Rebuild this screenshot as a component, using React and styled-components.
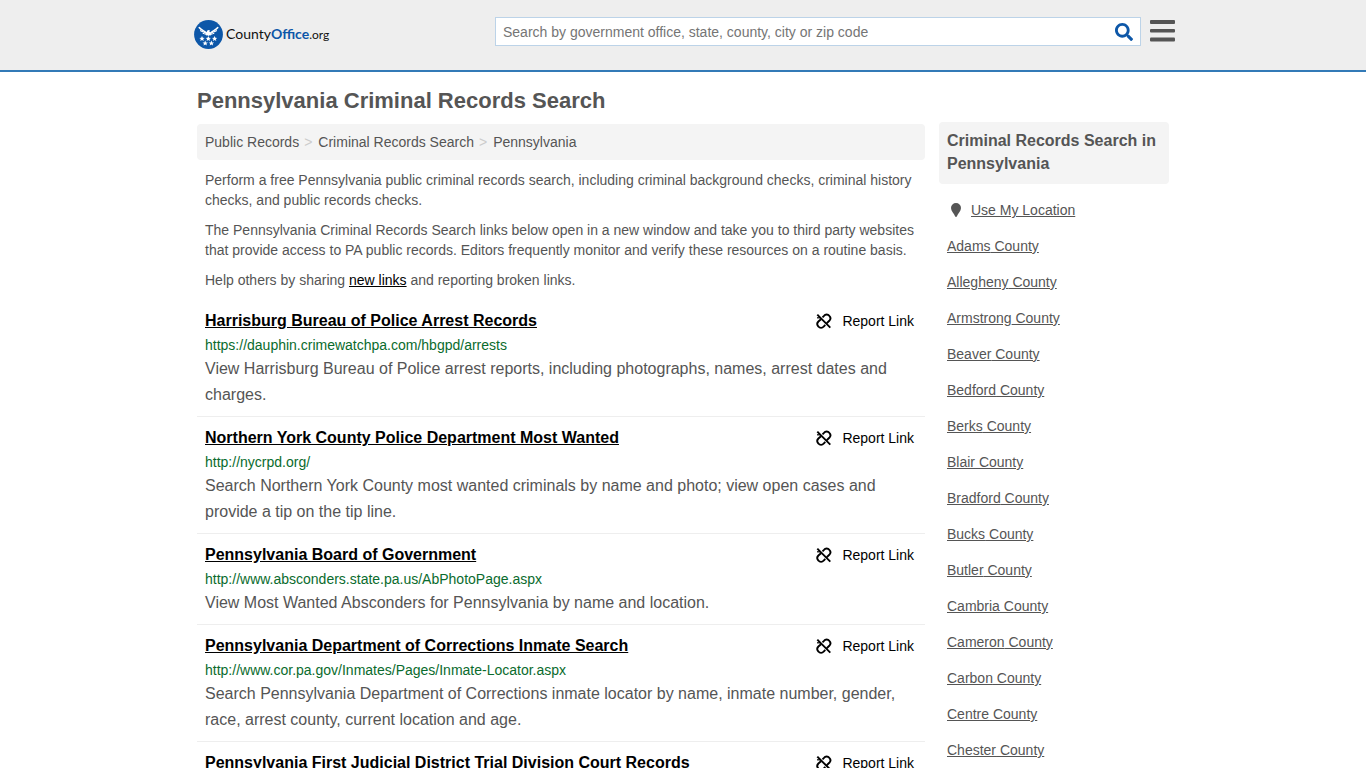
import React from 'react'
import styled, { createGlobalStyle } from 'styled-components'
import { FaSearch } from 'react-icons/fa'

const records = [
  {
    title: 'Harrisburg Bureau of Police Arrest Records',
    url: 'https://dauphin.crimewatchpa.com/hbgpd/arrests',
    text: 'View Harrisburg Bureau of Police arrest reports, including photographs, names, arrest dates and charges.',
  },
  {
    title: 'Northern York County Police Department Most Wanted',
    url: 'http://nycrpd.org/',
    text: 'Search Northern York County most wanted criminals by name and photo; view open cases and provide a tip on the tip line.',
  },
  {
    title: 'Pennsylvania Board of Government',
    url: 'http://www.absconders.state.pa.us/AbPhotoPage.aspx',
    text: 'View Most Wanted Absconders for Pennsylvania by name and location.',
  },
  {
    title: 'Pennsylvania Department of Corrections Inmate Search',
    url: 'http://www.cor.pa.gov/Inmates/Pages/Inmate-Locator.aspx',
    text: 'Search Pennsylvania Department of Corrections inmate locator by name, inmate number, gender, race, arrest county, current location and age.',
  },
  { title: 'Pennsylvania First Judicial District Trial Division Court Records' },
]

const counties = [
  'Adams', 'Allegheny', 'Armstrong', 'Beaver', 'Bedford', 'Berks', 'Blair', 'Bradford',
  'Bucks', 'Butler', 'Cambria', 'Cameron', 'Carbon', 'Centre', 'Chester',
]

const stars = [[8, 18.7], [14.3, 18.7], [20.6, 18.7], [11.2, 23.3], [17.4, 23.3]]

const LogoMark = () => (
  <svg width="29" height="29" viewBox="0 0 29 29" aria-hidden="true">
    <circle cx="14.5" cy="14.5" r="14.4" fill="#0d57a8" />
    <g fill="none" stroke="#fff" strokeLinecap="round">
      <path strokeWidth="1.500" d="M5.200 7.500C7 10.200 9.700 10.300 12.700 13.200M23.800 7.500C22 10.200 19.300 10.300 16.300 13.200" />
      <path strokeWidth="1.300" d="M6.700 10.700c1.700 1.200 3.500 1 5.800 2.900M22.300 10.700c-1.700 1.200-3.500 1-5.800 2.900" />
      <path strokeWidth="1" d="M9 13.400c1.300.6 2.300.4 3.800 1.200M20 13.400c-1.300.6-2.300.4-3.800 1.200" />
    </g>
    <path fill="#fff" d="M12 13l1.600-2.700 1.500-.3 1 .9-1 .3 1.900 1.800-.9 1.500 1 1-1.700-.2-.9.8-.9-.8-1.700.2 1-1z" />
    {stars.map(([x, y]) => (
      <path
        key={`${x}-${y}`}
        fill="#fff"
        transform={`translate(${x} ${y})`}
        d="M0-2.700.8-.9 2.700-.8 1.200.4 1.700 2.300 0 1.300-1.700 2.300-1.200.4-2.700-.8-.8-.9z"
      />
    ))}
  </svg>
)

const BrokenLinkIcon = () => (
  <svg width="16" height="16" viewBox="0 0 16 16" fill="none" stroke="#000" strokeWidth="1.900" aria-hidden="true">
    <path d="M1.300 1.600l13 13" />
    <path d="M6.500 4.300l1.500-1.500a3.300 3.300 0 0 1 5.300 0a3.600 3.600 0 0 1 0 5l-2.600 2.400" />
    <path d="M5 6.200l-2.600 2.300a3.600 3.600 0 0 0 0 5a3.300 3.300 0 0 0 5.300 0l1.600-1.600" />
    <path d="M1 4.800h3.500" strokeWidth="1.200" />
  </svg>
)

const App = () => {
  return (
    <Page>
      <GlobalStyle />
      <Header>
        <div className="inner">
          <Logo href="#">
            <LogoMark />
            <span className="name">County<b>Office</b><small>.org</small></span>
          </Logo>
          <SearchForm role="search" onSubmit={(e) => e.preventDefault()}>
            <input
              type="text"
              aria-label="Search"
              placeholder="Search by government office, state, county, city or zip code"
            />
            <button type="submit" aria-label="Submit search"><FaSearch size={18} /></button>
          </SearchForm>
          <MenuButton type="button" aria-label="Menu">
            <svg width="25" height="22" viewBox="0 0 25 22" fill="#555">
              <rect width="25" height="4" rx="1" />
              <rect y="9" width="25" height="3.500" rx="1" />
              <rect y="17.500" width="25" height="4" rx="1" />
            </svg>
          </MenuButton>
        </div>
      </Header>

      <Container>
        <Heading>Pennsylvania Criminal Records Search</Heading>
        <Columns>
          <main>
            <Breadcrumb aria-label="Breadcrumb">
              <a href="#">Public Records</a>
              <span>&gt;</span>
              <a href="#">Criminal Records Search</a>
              <span>&gt;</span>
              <a href="#">Pennsylvania</a>
            </Breadcrumb>
            <Intro>
              <p>
                Perform a free Pennsylvania public criminal records search, including criminal
                background checks, criminal history checks, and public records checks.
              </p>
              <p>
                The Pennsylvania Criminal Records Search links below open in a new window and take
                you to third party websites that provide access to PA public records. Editors
                frequently monitor and verify these resources on a routine basis.
              </p>
              <p>
                Help others by sharing <a href="#">new links</a> and reporting broken links.
              </p>
            </Intro>
            {records.map((record) => (
              <Record key={record.title}>
                <div className="top">
                  <h2><a href="#">{record.title}</a></h2>
                  <ReportLink href="#"><BrokenLinkIcon />Report Link</ReportLink>
                </div>
                {record.url && <div className="url">{record.url}</div>}
                {record.text && <p>{record.text}</p>}
              </Record>
            ))}
          </main>

          <Sidebar>
            <h3>Criminal Records Search in Pennsylvania</h3>
            <ul>
              <li>
                <svg width="10" height="14" viewBox="0 0 10 14" fill="#555" aria-hidden="true">
                  <path d="M5 0a5 5 0 0 1 5 5c0 3-3 5.500-4.200 8.400a.9.9 0 0 1-1.600 0C3 10.500 0 8 0 5a5 5 0 0 1 5-5z" />
                </svg>
                <a href="#">Use My Location</a>
              </li>
              {counties.map((county) => (
                <li key={county}><a href="#">{county} County</a></li>
              ))}
            </ul>
          </Sidebar>
        </Columns>
      </Container>
    </Page>
  )
}

const GlobalStyle = createGlobalStyle`
  * {
    box-sizing: border-box;
    margin: 0;
    padding: 0;
  }

  body {
    background: #fff;
    color: #555;
    font: 14px/20px "Liberation Sans", Arial, sans-serif;
  }

  button {
    border: 0;
    background: none;
    cursor: pointer;
  }
`;

const Page = styled.div`
  height: 100vh;
  overflow: hidden;
`;

const Header = styled.header`
  background: #eee;
  border-bottom: 2px solid #337ab7;

  .inner {
    display: flex;
    align-items: flex-start;
    max-width: 984px;
    height: 70px;
    margin: 0 auto;
    padding: 17px 0 0 3px;
  }
`;

const Logo = styled.a`
  display: flex;
  align-items: center;
  gap: 3px;
  padding-top: 3px;
  color: #111;
  text-decoration: none;

  .name {
    font: 14px/20px Lato, sans-serif;
  }

  b {
    color: #0d57a8;
  }

  small {
    font-size: 12px;
  }
`;

const SearchForm = styled.form`
  display: flex;
  width: 646px;
  height: 29px;
  margin-left: auto;
  background: #fff;
  border: 1px solid #bcd3e8;

  input {
    flex: 1;
    min-width: 0;
    padding: 0 7px;
    border: 0;
    outline: 0;
    background: none;
    color: #555;
    font: inherit;
  }

  input::placeholder {
    color: #757575;
  }

  button {
    display: flex;
    align-items: center;
    padding: 0 7px;
    color: #0d57a8;
  }
`;

const MenuButton = styled.button`
  display: flex;
  margin-left: 9px;
  padding-top: 3px;
`;

const Container = styled.div`
  max-width: 972px;
  margin: 0 auto;
`;

const Heading = styled.h1`
  padding: 14px 0 6px;
  font-size: 22px;
  line-height: 30px;
`;

const Columns = styled.div`
  display: grid;
  grid-template-columns: minmax(0, 1fr) 230px;
  gap: 14px;
`;

const Breadcrumb = styled.nav`
  display: flex;
  gap: 5px;
  margin-top: 2px;
  padding: 8px;
  background: #f4f4f4;
  border-radius: 4px;

  a {
    color: #555;
    text-decoration: none;
  }

  span {
    padding-right: 1px;
    color: #ccc;
  }
`;

const Intro = styled.div`
  padding: 10px 8px 0;

  p {
    margin-bottom: 10px;
  }

  a {
    color: #000;
  }
`;

const Record = styled.article`
  padding: 8px;
  border-bottom: 1px solid #eee;

  .top {
    display: flex;
    justify-content: space-between;
    padding-right: 3px;
    line-height: 26px;
  }

  h2 {
    font-size: 16px;
  }

  h2 a {
    color: #000;
  }

  .url {
    color: #0a6b2d;
    line-height: 22px;
  }

  p {
    font-size: 16px;
    line-height: 26px;
  }
`;

const ReportLink = styled.a`
  display: flex;
  align-items: center;
  gap: 10px;
  color: #000;
  text-decoration: none;
`;

const Sidebar = styled.aside`
  h3 {
    padding: 7px 8px 9px;
    background: #f4f4f4;
    border-radius: 4px;
    font-size: 16px;
    line-height: 23px;
  }

  ul {
    padding: 8px;
    list-style: none;
  }

  li {
    display: flex;
    align-items: center;
    height: 36px;
  }

  svg {
    margin: 0 10px 0 4px;
  }

  a {
    color: #555;
  }
`;

export default App
